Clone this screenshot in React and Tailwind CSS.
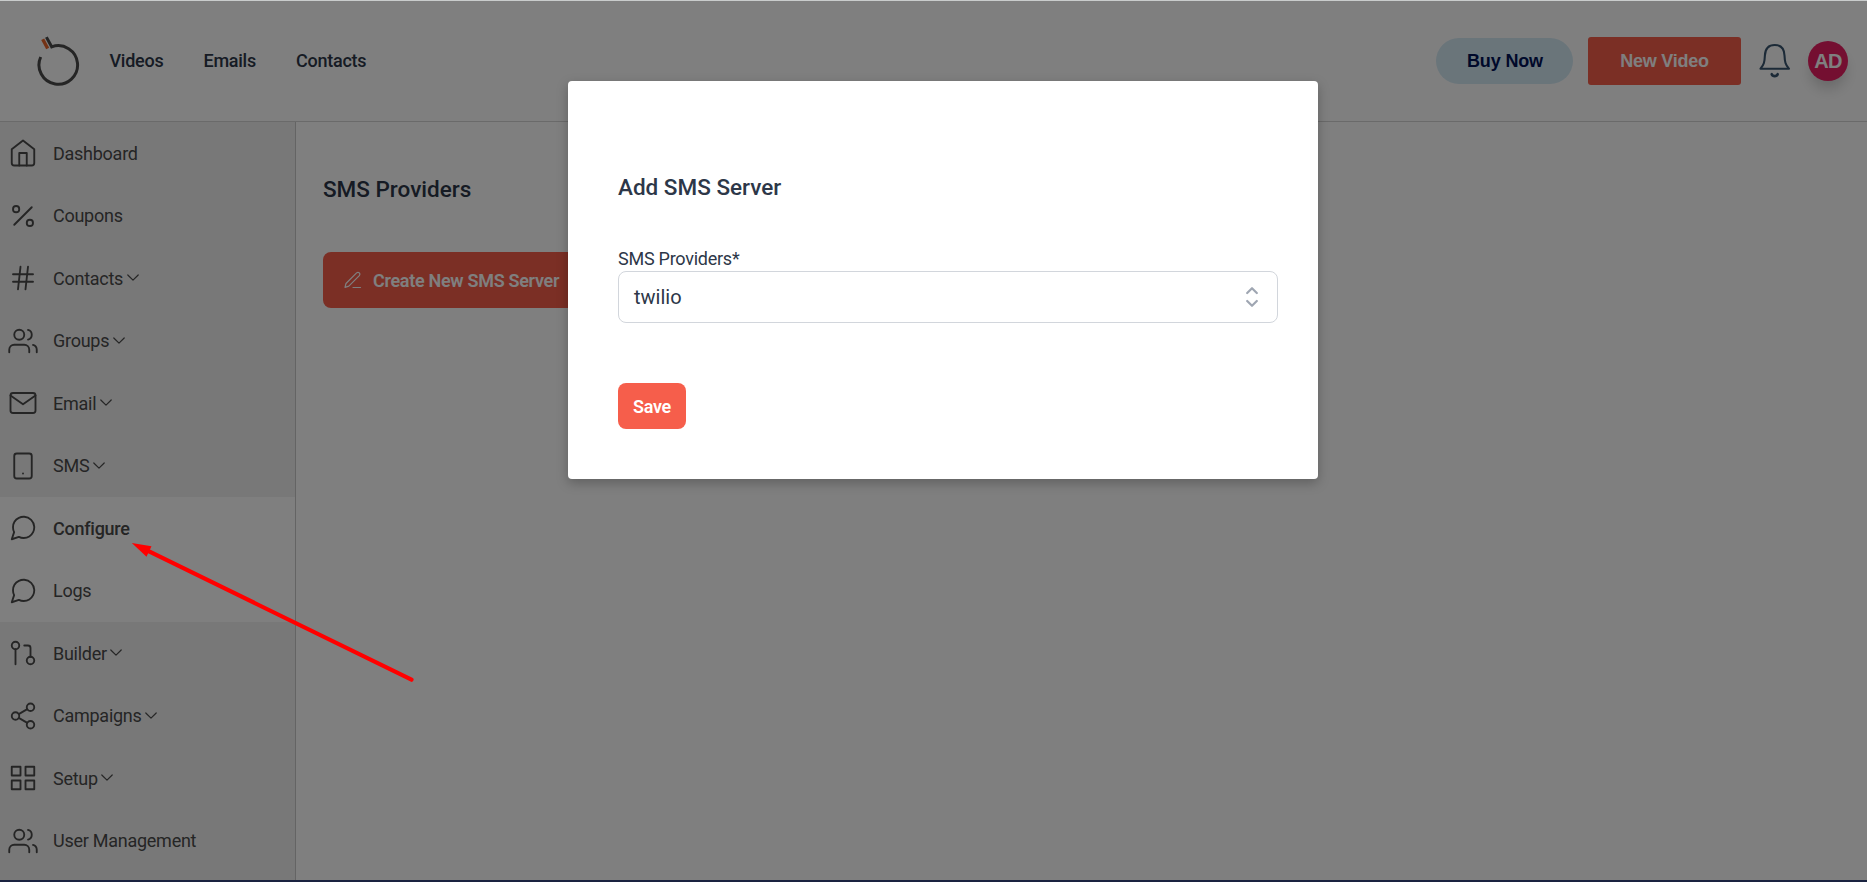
import React from 'react';
import { FiHome, FiPercent, FiHash, FiUsers, FiMail, FiSmartphone, FiMessageCircle, FiGitPullRequest, FiShare2, FiGrid } from 'react-icons/fi';

const items = [
  { label: 'Dashboard', Icon: FiHome },
  { label: 'Coupons', Icon: FiPercent },
  { label: 'Contacts', Icon: FiHash, menu: true },
  { label: 'Groups', Icon: FiUsers, menu: true },
  { label: 'Email', Icon: FiMail, menu: true },
  { label: 'SMS', Icon: FiSmartphone, menu: true },
  { label: 'Configure', Icon: FiMessageCircle, sub: true, active: true },
  { label: 'Logs', Icon: FiMessageCircle, sub: true },
  { label: 'Builder', Icon: FiGitPullRequest, menu: true },
  { label: 'Campaigns', Icon: FiShare2, menu: true },
  { label: 'Setup', Icon: FiGrid, menu: true },
  { label: 'User Management', Icon: FiUsers },
];

function Logo() {
  return (
    <svg width="44" height="54" viewBox="0.500 0.500 44 54" fill="none" className="shrink-0">
      <path d="M5.200 23.500A19.300 19.300 0 1 0 16.200 13.300L10.900 3.600" stroke="#4b4b4b" strokeWidth="3" />
      <path d="M7.200 5.700L12.200 15" stroke="#e8642a" strokeWidth="3.400" />
    </svg>
  );
}

function Bell() {
  return (
    <svg width="32" height="36" viewBox="0 0 32 36" fill="none" stroke="#38556f" strokeWidth="2.100" strokeLinecap="round" strokeLinejoin="round">
      <path d="M1.500 25.700C5 21.500 5.600 19 5.900 12.500C6.200 5.500 10 2 15.700 2S25.200 5.500 25.500 12.500C25.800 19 26.400 21.500 29.900 25.700Z" />
      <path d="M12.700 31.200C13.700 33.800 17.700 33.800 18.700 31.200" strokeWidth="2.600" />
    </svg>
  );
}

function Chevron() {
  return (
    <svg width="12" height="8" viewBox="0 0 12 8" fill="none" stroke="currentColor" strokeWidth="1.200" strokeLinecap="round" strokeLinejoin="round" className="ml-[3.500px]">
      <path d="M0.800 1L6 6.200L11.200 1" />
    </svg>
  );
}

function Header() {
  return (
    <header className="flex h-[122px] shrink-0 items-center border-b border-[#d4d4d4] pr-[19px] pl-[36px] text-[#2d3748]">
      <Logo />
      <nav className="ml-[29.5px] flex gap-10 text-lg font-medium tracking-[-0.25px]">
        <a>Videos</a>
        <a>Emails</a>
        <a>Contacts</a>
      </nav>
      <div className="ml-auto flex items-center font-['Liberation_Sans',sans-serif] text-lg font-bold">
        <button className="h-[46px] w-[137px] rounded-full bg-[#d5eaf5] pl-px tracking-[-0.15px] text-[#001255]">Buy Now</button>
        <button className="ml-[15px] h-12 w-[153px] rounded-[3px] bg-[#f65e4b] tracking-[-0.25px] text-white">New Video</button>
        <div className="ml-[18px]"><Bell /></div>
        <div className="ml-[17px] flex size-10 items-center justify-center rounded-full bg-[#e91e63] text-xl tracking-[-0.8px] text-white shadow-[0_10px_15px_-3px_rgba(0,0,0,0.2)]">AD</div>
      </div>
    </header>
  );
}

function Sidebar() {
  return (
    <aside className="w-[296px] shrink-0 border-r border-[#c8c8c8] bg-[#f1f1f1] text-lg tracking-[-0.26px] text-[#4b4b4b]">
      {items.map(({ label, Icon, menu, sub, active }) => (
        <div key={label} className={`flex h-[62.5px] items-center pl-2 ${sub ? 'bg-white' : ''} ${active ? 'font-medium' : ''}`}>
          <Icon size={30} strokeWidth={1.5} />
          <span className="ml-[15px] pt-px">{label}</span>
          {menu && <Chevron />}
        </div>
      ))}
    </aside>
  );
}

function PencilLine() {
  return (
    <svg width="18" height="18" viewBox="0 0 18 18" fill="none" stroke="currentColor" strokeWidth="1.200" strokeLinecap="round" strokeLinejoin="round">
      <path d="M1 16.300L2 12.500L12.600 1.900Q14 0.700 15.300 1.900Q16.400 3.200 15.300 4.600L4.800 15.200Z" />
      <path d="M9 16.500H16.500" />
    </svg>
  );
}

export default function App() {
  return (
    <div className="relative flex h-[882px] w-[1867px] flex-col overflow-hidden bg-white font-[Roboto,sans-serif]">
      <Header />
      <div className="flex min-h-0 flex-1">
        <Sidebar />
        <main className="flex flex-1 flex-col items-start pt-[50px] pl-[27px]">
          <h1 className="text-[22.5px] leading-[34px] font-medium text-[#2d3748]">SMS Providers</h1>
          <button className="mt-[46px] flex h-14 w-[258px] items-center rounded-lg bg-[#f65e4b] pl-[21px] text-lg font-semibold tracking-[-0.3px] text-white">
            <PencilLine />
            <span className="ml-[11px] pt-0.5 whitespace-nowrap">Create New SMS Server</span>
          </button>
        </main>
      </div>

      <div className="absolute inset-x-0 top-px bottom-0 border-b-2 border-[#1a2340] bg-black/50 bg-clip-padding" />
      <div className="absolute inset-x-0 top-0 h-px bg-[#c9cccc]" />

      <section className="absolute top-[81px] left-[568px] flex h-[398px] w-[750px] flex-col items-start rounded-[4px] bg-white px-[50px] pt-[89px] text-[#2d3748] shadow-[0_4px_12px_rgba(0,0,0,0.25)]">
        <h2 className="text-[22.5px] leading-[34px] font-medium">Add SMS Server</h2>
        <label className="mt-[42px] text-lg leading-[25px] tracking-[-0.25px]">SMS Providers*</label>
        <div className="flex h-[52px] w-[660px] items-center justify-between rounded-lg border border-[#d2d6dc] pr-[19px] pl-[15px] text-xl">
          <span>twilio</span>
          <svg width="12" height="22" viewBox="0 0 12 22" fill="none" stroke="#9fa6b2" strokeWidth="2.200" strokeLinecap="round" strokeLinejoin="round">
            <path d="M1.200 7L6 2.200L10.800 7M1.200 15L6 19.800L10.800 15" />
          </svg>
        </div>
        <button className="mt-[60px] h-[46px] w-[68px] rounded-lg bg-[#f65e4b] pt-0.5 text-lg font-semibold tracking-[-0.3px] text-white">Save</button>
      </section>

      <svg width="280" height="144" viewBox="0.500 0 280 144" className="absolute top-[539px] left-[133px] overflow-visible">
        <path d="M14 11.200L279 140.700" stroke="red" strokeWidth="4.200" strokeLinecap="round" />
        <path d="M-0.700 4L19 7.300L14 17.700Z" fill="red" />
      </svg>
    </div>
  );
}
